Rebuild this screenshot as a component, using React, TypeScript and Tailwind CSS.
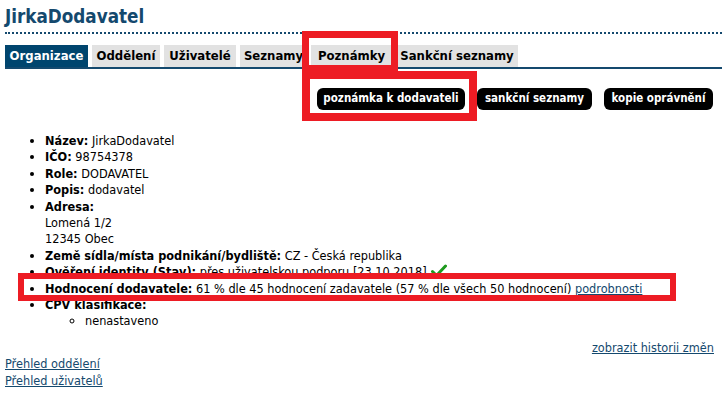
import React from 'react';

const tabs = [
  { label: 'Organizace', w: 'w-[83px]' },
  { label: 'Oddělení', w: 'w-[68px]' },
  { label: 'Uživatelé', w: 'w-[72px]' },
  { label: 'Seznamy', w: 'w-[67px]' },
  { label: 'Poznámky', w: 'w-[81px]' },
  { label: 'Sankční seznamy', w: 'w-[122px]' },
];
const actions = [
  { label: 'poznámka k dodavateli', w: 'w-[148px]' },
  { label: 'sankční seznamy', w: 'w-[115px]' },
  { label: 'kopie oprávnění', w: 'w-[109px]' },
];

const Check = () => (
  <svg width="16" height="13" viewBox="0 0 16 13" className="inline-block ml-[4px] -mt-[4px] align-middle">
    <path d="M1.5 7.5 L5.5 11.5 L14.5 2" fill="none" stroke="#1e9a1e" strokeWidth="3" strokeLinecap="round" strokeLinejoin="round" />
  </svg>
);

const Item: React.FC<{ label: string; children?: React.ReactNode }> = ({ label, children }) => (
  <li>
    <b>{label}</b> {children}
  </li>
);

export default function App() {
  return (
    <div
      className="relative w-[727px] h-[395px] bg-white text-black overflow-hidden"
      style={{ fontFamily: '"DejaVu Sans Condensed", "DejaVu Sans", sans-serif' }}
    >
      <div className="px-[5px] pt-[5px]">
        <h1 className="text-[18.7px] leading-[24px] font-bold text-[#14496e]">JirkaDodavatel</h1>
        <div className="mt-[3px] border-b-[2px] border-dotted border-[#14496e]" />

        <div className="mt-[11px] flex gap-[4px] border-b-2 border-[#14496e]">
          {tabs.map((t, i) => (
            <div
              key={t.label}
              className={
                i === 0
                  ? `${t.w} h-[22px] flex items-center justify-center bg-[#00456e] text-white text-[13px] font-bold whitespace-nowrap`
                  : `${t.w} h-[22px] flex items-center justify-center bg-[#e2e2e2] text-black text-[13px] font-bold whitespace-nowrap`
              }
            >
              {t.label}
            </div>
          ))}
        </div>

        <div className="mt-[19px] flex justify-end gap-[12px] pr-[9px]">
          {actions.map((a) => (
            <span
              key={a.label}
              className={`${a.w} h-[22px] flex items-center justify-center rounded-[6px] bg-black text-white text-[11.5px] font-bold whitespace-nowrap`}
            >
              {a.label}
            </span>
          ))}
        </div>

        <ul className="mt-[23px] pl-[40px] list-disc text-[12.6px] leading-[16.4px]">
          <Item label="Název:">JirkaDodavatel</Item>
          <Item label="IČO:">98754378</Item>
          <Item label="Role:">DODAVATEL</Item>
          <Item label="Popis:">dodavatel</Item>
          <li>
            <b>Adresa:</b>
            <br />
            Lomená 1/2
            <br />
            12345 Obec
          </li>
          <Item label="Země sídla/místa podnikání/bydliště:">CZ - Česká republika</Item>
          <Item label="Ověření identity (Stav):">
            přes uživatelskou podporu [23.10.2018]
            <Check />
          </Item>
          <Item label="Hodnocení dodavatele:">
            61 % dle 45 hodnocení zadavatele (57 % dle všech 50 hodnocení){' '}
            <a className="text-[#14496e] underline">podrobnosti</a>
          </Item>
          <li>
            <b>CPV klasifikace:</b>
            <ul className="pl-[40px] list-[circle]">
              <li>nenastaveno</li>
            </ul>
          </li>
        </ul>

        <div className="mt-[10px] flex justify-end pr-[8px] text-[12.6px] leading-[16.4px]">
          <a className="text-[#14496e] underline">zobrazit historii změn</a>
        </div>
        <div className="flex flex-col items-start text-[12.6px] leading-[16.4px]">
          <a className="text-[#14496e] underline">Přehled oddělení</a>
          <a className="text-[#14496e] underline">Přehled uživatelů</a>
        </div>
      </div>

      <div className="absolute left-[302px] top-[31px] w-[96px] h-[41px] border-[7px] border-[#ed1c24]" />
      <div className="absolute left-[302px] top-[71px] w-[175px] h-[50px] border-[8px] border-[#ed1c24]" />
      <div className="absolute left-[18px] top-[273px] w-[658px] h-[28px] border-[6px] border-[#ed1c24]" />
    </div>
  );
}
